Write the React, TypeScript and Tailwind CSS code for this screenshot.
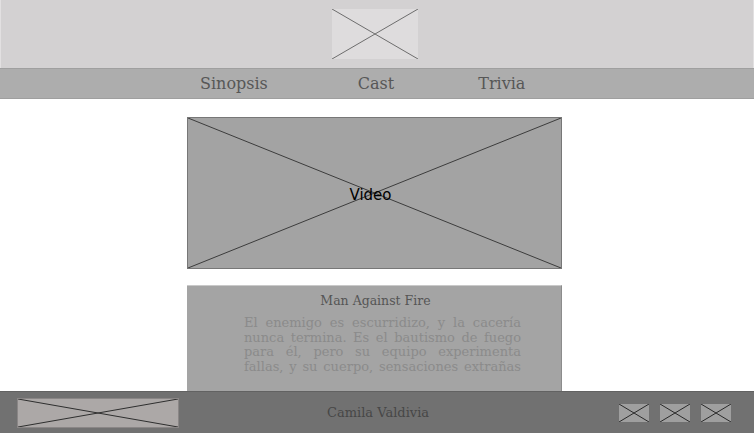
import React from 'react';

const Cross: React.FC<{ stroke?: string; width?: number }> = ({ stroke = '#6f6f6f', width = 1 }) => (
   <svg className="absolute inset-0 h-full w-full" viewBox="0 0 100 100" preserveAspectRatio="none">
      <line x1="0" y1="0" x2="100" y2="100" stroke={stroke} strokeWidth={width} vectorEffect="non-scaling-stroke" />
      <line x1="100" y1="0" x2="0" y2="100" stroke={stroke} strokeWidth={width} vectorEffect="non-scaling-stroke" />
   </svg>
);

const paragraph = [
   'El enemigo es escurridizo, y la cacería',
   'nunca termina. Es el bautismo de fuego',
   'para él, pero su equipo experimenta',
   'fallas, y su cuerpo, sensaciones extrañas',
];

const App: React.FC = () => {
   return (
      <div className="relative h-[433px] w-[754px] overflow-hidden bg-white font-['DejaVu_Serif',serif]">
         {/* Header */}
         <header className="flex h-[68px] items-start border-x border-[#e2e0e1] bg-[#d3d1d2] pl-[331px] pt-[9px]">
            <div className="relative h-[50px] w-[86px] bg-[#dedcdd]">
               <Cross stroke="#6d6d6d" />
            </div>
         </header>

         {/* Nav */}
         <nav className="flex h-[31px] items-center border-y border-[#9f9f9f] bg-[#adadad] pl-[200px] text-[16px] text-[#575757]">
            <span>Sinopsis</span>
            <span className="ml-[90px]">Cast</span>
            <span className="ml-[84px]">Trivia</span>
         </nav>

         <main className="ml-[187px] w-[375px] pt-[18px]">
            {/* Video */}
            <div className="relative flex h-[152px] items-center justify-center border border-[#777777] bg-[#a3a3a3] pr-[8px] pt-[4px]">
               <Cross stroke="#3c3c3c" />
               <span className="relative font-['DejaVu_Sans',sans-serif] text-[15px] text-black">Video</span>
            </div>

            {/* Synopsis card */}
            <section className="mt-[16px] h-[160px] border-t border-r border-t-[#c9c9c9] border-r-[#8c8c8c] bg-[#a4a4a4] pt-[6px]">
               <h2 className="ml-[3px] text-center text-[12.5px] leading-[18px] text-[#555555]">Man Against Fire</h2>
               <p className="ml-[57px] mt-[6px] w-[277px] text-justify text-[13px] leading-[14.5px] text-[#8b8b8b] [text-align-last:justify]">
                  {paragraph.map((line, i) => (
                     <span key={i} className="block">{line}</span>
                  ))}
               </p>
            </section>
         </main>

         {/* Footer */}
         <footer className="fixed bottom-0 left-0 flex h-[42px] w-[754px] items-center border-t border-[#626262] bg-[#717171]">
            <div className="relative ml-[17px] h-[30px] w-[162px] border border-[#8a8686] bg-[#aca8a7]">
               <Cross stroke="#2e2e2e" />
            </div>
            <span className="ml-[148px] text-[13px] text-[#474747]">Camila Valdivia</span>
            <div className="ml-auto mr-[23px] flex gap-[11px]">
               {[0, 1, 2].map((i) => (
                  <div key={i} className="relative h-[18px] w-[30px] bg-[#9f9f9f]">
                     <Cross stroke="#2a2a2a" />
                  </div>
               ))}
            </div>
         </footer>
      </div>
   );
};

export default App;
